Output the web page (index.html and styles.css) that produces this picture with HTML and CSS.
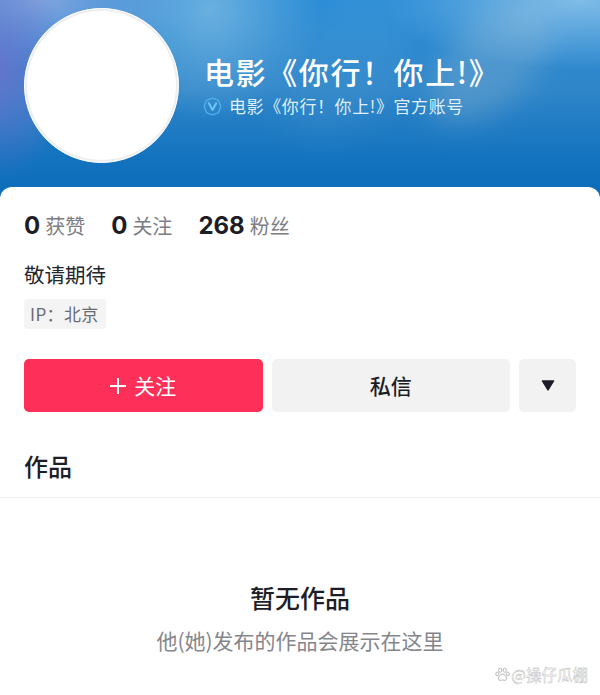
FILE: index.html
```html
<!DOCTYPE html>
<html lang="zh-CN">
<head>
    <meta charset="UTF-8">
    <meta name="viewport" content="width=device-width, initial-scale=1.0">
    <title>电影《你行！你上！》</title>
    <link rel="stylesheet" href="styles.css">
</head>
<body>

<div class="page">
    <header class="banner">
        <div class="streak streak-one"></div>
        <div class="streak streak-two"></div>
        <div class="avatar"></div>
        <div class="banner-text">
            <h1 class="name">电影《你行！你上!》</h1>
            <div class="verified">
                <svg class="verified-icon" viewBox="0 0 20 20" width="19" height="19" aria-hidden="true">
                    <path d="M10 1.2 16.2 3.4 18.8 10 16.2 16.6 10 18.8 3.8 16.6 1.2 10 3.8 3.4Z" fill="none" stroke="#4fb4f2" stroke-width="1.3" stroke-linejoin="round"/>
                    <path d="M6.2 6.6 10 13.6 13.8 6.6" fill="none" stroke="#6cc6f8" stroke-width="2.2" stroke-linecap="round" stroke-linejoin="round"/>
                </svg>
                <span>电影《你行！你上!》官方账号</span>
            </div>
        </div>
    </header>

    <main class="card">
        <div class="stats">
            <div class="stat"><b>0</b><span>获赞</span></div>
            <div class="stat"><b>0</b><span>关注</span></div>
            <div class="stat"><b>268</b><span>粉丝</span></div>
        </div>
        <p class="bio">敬请期待</p>
        <span class="tag">IP：北京</span>

        <div class="actions">
            <button class="btn btn-follow" type="button"><span class="plus"></span><span class="btn-label">关注</span></button>
            <button class="btn btn-message" type="button"><span class="btn-label">私信</span></button>
            <button class="btn btn-more" type="button" aria-label="更多">
                <svg viewBox="0 0 14 11" width="14" height="11" aria-hidden="true">
                    <path d="M1.4 1 12.6 1 7 10Z" fill="#1c1d26" stroke="#1c1d26" stroke-width="1.4" stroke-linejoin="round"/>
                </svg>
            </button>
        </div>

        <h2 class="section-title">作品</h2>

        <div class="empty">
            <div class="empty-title">暂无作品</div>
            <div class="empty-text">他(她)发布的作品会展示在这里</div>
        </div>
        <div class="watermark">
            <svg viewBox="0 0 16 16" width="15" height="15" aria-hidden="true">
                <g fill="#fff" stroke="#b4b4b4" stroke-width="1">
                    <ellipse cx="5.6" cy="3.4" rx="1.7" ry="2.2"/>
                    <ellipse cx="10.4" cy="3.4" rx="1.7" ry="2.2"/>
                    <ellipse cx="2.4" cy="7.4" rx="1.6" ry="2"/>
                    <ellipse cx="13.6" cy="7.4" rx="1.6" ry="2"/>
                    <path d="M8 7.4C10 7.4 12.4 10.2 12.4 12.4 12.4 14.6 10 14.4 8 13.8 6 14.4 3.6 14.6 3.6 12.4 3.6 10.2 6 7.4 8 7.4Z"/>
                </g>
            </svg>
            <span>@操仔瓜棚</span>
        </div>
    </main>
</div>

</body>
</html>
```

FILE: styles.css
```css
* {
    box-sizing: border-box;
}
html, body {
    margin: 0;
    padding: 0;
}
body {
    font-family: "Noto Sans CJK SC", "Noto Sans", sans-serif;
    background-color: #fff;
    color: #1c1d26;
}
.page {
    width: 600px;
    height: 695px;
    overflow: hidden;
    position: relative;
}
.banner {
    height: 200px;
    padding: 8px 0 0 24px;
    display: flex;
    gap: 26px;
    position: relative;
    overflow: hidden;
    background:
        radial-gradient(ellipse 70px 110px at 0 70px, rgba(112, 112, 205, 0.8), rgba(112, 112, 205, 0) 100%),
        radial-gradient(ellipse 150px 70px at 40px 0, rgba(165, 175, 225, 0.7), rgba(165, 175, 225, 0) 100%),
        radial-gradient(ellipse 200px 70px at 580px 0, rgba(150, 200, 235, 0.8), rgba(150, 200, 235, 0) 100%),
        radial-gradient(ellipse 110px 110px at 210px 10px, rgba(140, 195, 230, 0.65), rgba(140, 195, 230, 0) 100%),
        linear-gradient(180deg, #2a8cd6 0%, #2f86c9 45%, #1473bf 78%, #0b6cb9 100%);
}
.streak {
    position: absolute;
    border-radius: 50%;
    filter: blur(14px);
}
.streak-one {
    left: 290px;
    top: -20px;
    width: 110px;
    height: 170px;
    background: rgba(255, 255, 255, 0.04);
    transform: rotate(32deg);
}
.streak-two {
    left: 450px;
    top: -10px;
    width: 80px;
    height: 150px;
    background: rgba(190, 205, 215, 0.22);
    transform: rotate(45deg);
}
.avatar {
    width: 155px;
    height: 155px;
    border-radius: 50%;
    background-color: #fff;
    border: 1px solid #fff;
    box-shadow: inset 0 0 0 2px #eceef0;
    flex-shrink: 0;
    position: relative;
}
.banner-text {
    padding-top: 41px;
    position: relative;
    color: #fff;
}
.name {
    margin: 0 0 0 -1px;
    font-size: 30px;
    line-height: 44px;
    font-weight: 500;
    letter-spacing: 1.6px;
    white-space: nowrap;
    width: 300px;
}
.verified {
    display: flex;
    align-items: center;
    gap: 7px;
    margin-top: 1px;
    margin-left: -2px;
    font-size: 17px;
    line-height: 24px;
    letter-spacing: 0.6px;
    color: #dff0fb;
    white-space: nowrap;
}
.verified-icon {
    flex-shrink: 0;
}
.card {
    position: absolute;
    left: 0;
    right: 0;
    top: 187px;
    bottom: 0;
    padding: 21px 24px 0;
    background-color: #fff;
    border-radius: 12px 12px 0 0;
}
.stats {
    display: flex;
    gap: 26px;
    height: 36px;
    align-items: center;
}
.stat {
    display: flex;
    align-items: center;
    gap: 5px;
}
.stat b {
    font-family: "Inter", "Noto Sans", sans-serif;
    font-size: 24px;
    font-weight: 700;
    line-height: 36px;
}
.stat span {
    font-size: 20px;
    color: #7c7d84;
    line-height: 36px;
}
.bio {
    margin: 16px 0 0;
    font-size: 20.5px;
    line-height: 28px;
    color: #25262d;
}
.tag {
    display: inline-block;
    margin-top: 11px;
    padding: 0 7px 0 6px;
    height: 30px;
    line-height: 30px;
    font-size: 17px;
    letter-spacing: 0.4px;
    color: #6a6b72;
    background-color: #f4f4f5;
    border-radius: 3px;
}
.actions {
    display: flex;
    gap: 9px;
    margin-top: 30px;
}
.btn {
    height: 53px;
    border: none;
    border-radius: 5px;
    font-family: inherit;
    font-size: 21px;
    font-weight: 500;
    padding: 0;
    display: flex;
    align-items: center;
    justify-content: center;
}
.btn-label {
    margin-bottom: 2px;
}
.btn-follow {
    width: 239px;
    background-color: #fe2f58;
    color: #fff;
    gap: 8px;
    font-weight: 400;
}
.plus {
    width: 16px;
    height: 16px;
    background:
        linear-gradient(#fff, #fff) center / 16px 2px no-repeat,
        linear-gradient(#fff, #fff) center / 2px 16px no-repeat;
}
.btn-message {
    width: 239px;
    background-color: #f2f2f3;
    color: #1c1d26;
}
.btn-more {
    width: 57px;
    background-color: #f2f2f3;
}
.section-title {
    margin: 0 -24px;
    padding: 37px 24px 12px;
    height: 86px;
    font-size: 24px;
    line-height: 34px;
    font-weight: 500;
    border-bottom: 1px solid #f0f0f1;
}
.empty {
    margin-top: 80px;
    text-align: center;
}
.empty-title {
    font-size: 25px;
    line-height: 38px;
    font-weight: 500;
    color: #1c1d26;
}
.empty-text {
    font-size: 21px;
    line-height: 32px;
    margin-top: 8px;
    color: #85868c;
}
.watermark {
    position: absolute;
    right: 12px;
    bottom: 10px;
    display: flex;
    align-items: center;
    gap: 1px;
    font-size: 15.5px;
    line-height: 22px;
    color: #fff;
    -webkit-text-stroke: 0.4px #b4b4b4;
}
```
